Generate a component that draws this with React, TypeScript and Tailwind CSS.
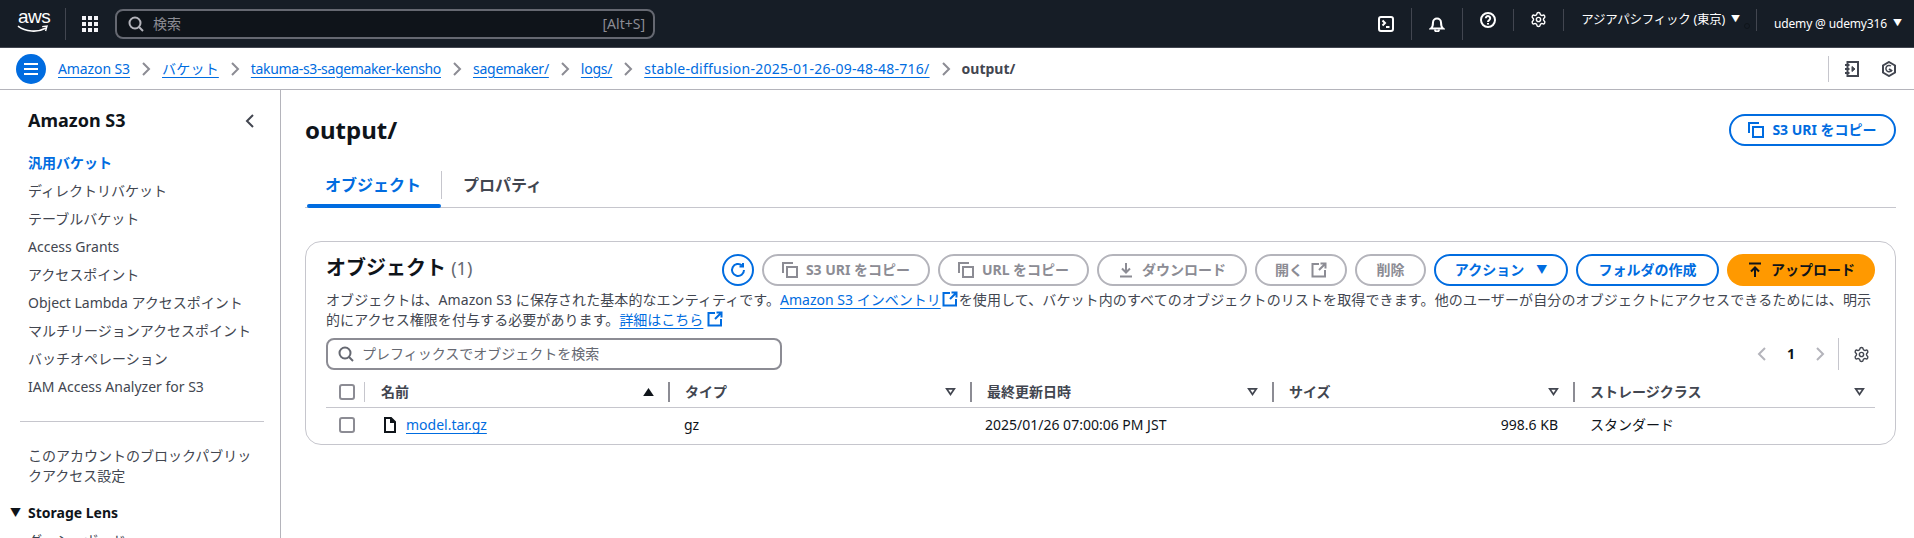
import type { ReactNode } from 'react';
import { Settings } from 'lucide-react';

function Icon({ className = '', children }: { className?: string; children: ReactNode }) {
  return (
    <svg viewBox="0 0 16 16" fill="none" stroke="currentColor" strokeWidth="2" className={`w-4 h-4 shrink-0 ${className}`}>
      {children}
    </svg>
  );
}

const SearchIcon = ({ className = '' }: { className?: string }) => (
  <Icon className={className}>
    <circle cx="7" cy="7" r="5.500" />
    <path d="M11 11 15 15" />
  </Icon>
);
const CopyIcon = () => (
  <Icon>
    <path d="M5 5h10v10H5z" />
    <path d="M11 1H1v10" />
  </Icon>
);
const ExternalIcon = ({ className = '' }: { className?: string }) => (
  <Icon className={className}>
    <path d="M8 2H1.500v12.500H14V8" />
    <path d="M9.500 1.500h5v5M14.500 1.500 8 8" />
  </Icon>
);
const Chevron = () => (
  <Icon className="text-[#8c8c94]">
    <path d="m5 2 6 6-6 6" />
  </Icon>
);

function Crumb({ children, className = 'tracking-[-0.25px]' }: { children: ReactNode; className?: string }) {
  return <a className={`text-[#006ce0] underline underline-offset-[3px] whitespace-nowrap ${className}`}>{children}</a>;
}

function HeaderSep({ short = false }: { short?: boolean }) {
  return <div className={`w-px bg-[#424650] ${short ? 'h-[22px] -mt-[8px]' : 'h-[32px]'}`} />;
}

function ToolButton({ children, disabled = false, width }: { children: ReactNode; disabled?: boolean; width: string }) {
  return (
    <button
      className={`${width} h-8 rounded-full border-2 flex items-center justify-center gap-2 text-sm font-bold whitespace-nowrap ${
        disabled ? 'border-[#b4b4bb] text-[#8c8c94]' : 'border-[#006ce0] text-[#006ce0]'
      }`}
    >
      {children}
    </button>
  );
}

function Checkbox() {
  return <div className="w-4 h-4 rounded-[3px] border-2 border-[#8c8c94] bg-white" />;
}

function SortIcon({ active = false }: { active?: boolean }) {
  return (
    <svg viewBox="0 0 12 9" className="w-[11px] h-[8px] shrink-0">
      {active ? (
        <path d="M6 0l6 9H0z" fill="#0f141a" />
      ) : (
        <path d="M1.800 1h8.400L6 7.200z" fill="none" stroke="#424650" strokeWidth="2" />
      )}
    </svg>
  );
}

function HeadCell({ label, active, sep = true, className = '', iconPad = 'pr-[14px]' }: { label: string; active?: boolean; sep?: boolean; className?: string; iconPad?: string }) {
  return (
    <div className={`flex items-center h-[28px] ${className}`}>
      {sep && <div className="w-0.5 h-[20px] bg-[#8c8c94] mr-[15px]" />}
      <span className="flex-1 font-bold text-sm text-[#424650] whitespace-nowrap">{label}</span>
      <div className={`${iconPad} flex`}>
        <SortIcon active={active} />
      </div>
    </div>
  );
}

const navItems = [
  'ディレクトリバケット',
  'テーブルバケット',
  'Access Grants',
  'アクセスポイント',
  'Object Lambda アクセスポイント',
  'マルチリージョンアクセスポイント',
  'バッチオペレーション',
  'IAM Access Analyzer for S3',
];

export default function App() {
  return (
    <div className='h-[538px] w-[1914px] overflow-hidden bg-white text-sm text-[#0f141a] font-["Noto_Sans","Noto_Sans_CJK_JP",sans-serif]'>
      {/* top bar */}
      <header className="h-[48px] bg-[#161d26] border-b border-[#424650] flex items-center text-white">
        <div className="w-[65px] pl-[17px] flex flex-col items-start leading-none">
          <span className='font-["Liberation_Sans",sans-serif] text-[19px] leading-[14px] tracking-[-0.5px] -mt-[5px] ml-[1px]'>aws</span>
          <svg viewBox="0 0 32 8" className="w-[31px] h-[8px] mt-[1px] text-white">
            <path d="M1 1c8 6 20 7 29 2" fill="none" stroke="currentColor" strokeWidth="1.600" />
            <path d="M26 1.500l5-.5-1.500 5" fill="none" stroke="currentColor" strokeWidth="1.400" />
          </svg>
        </div>
        <div className="w-px h-[32px] bg-[#424650]" />
        <div className="ml-4 grid grid-cols-3 gap-[2px]">
          {Array.from({ length: 9 }).map((_, i) => (
            <div key={i} className="w-[4px] h-[4px] bg-[#f3f3f7]" />
          ))}
        </div>
        <div className="ml-[17px] w-[540px] h-[30px] rounded-lg border-2 border-[#656871] bg-[#0f141a] flex items-center pl-[11px] pr-[8px]">
          <SearchIcon className="text-[#b4b4bb]" />
          <span className="ml-[9px] text-sm text-[#8c8c94]">検索</span>
          <span className="ml-auto text-sm text-[#8c8c94]">[Alt+S]</span>
        </div>
        <div className="ml-auto flex items-center h-full">
          <Icon className="mr-[17px] text-white">
            <rect x="1" y="1" width="14" height="14" rx="2" />
            <path d="m4.500 4.500 2.500 2.500-2.500 2.500M8 11h3.500" />
          </Icon>
          <HeaderSep />
          <Icon className="mx-[17px] text-white">
            <path d="M2 12.500h12c-1.800-1.500-2-3-2-6a4 4 0 0 0-8 0c0 3-.2 4.500-2 6z" />
            <path d="M6 13.500a2 2 0 0 0 4 0" />
          </Icon>
          <HeaderSep />
          <Icon className="mx-[17px] -mt-[8px] text-white">
            <circle cx="8" cy="8" r="7" />
            <path d="M5.800 6.300a2.200 2.200 0 1 1 3.400 1.800c-.8.500-1.200.9-1.200 1.900M8 11v1.500" />
          </Icon>
          <HeaderSep short />
          <Settings size={17} strokeWidth={2} className="mx-[16px] -mt-[8px] text-white" />
          <HeaderSep short />
          <span className="ml-[17px] text-[12.500px] tracking-[-0.25px] whitespace-nowrap -mt-[8px]">アジアパシフィック (東京)</span>
          <span className="ml-[6px] text-[9px] -mt-[8px]">▼</span>
          <div className="w-[6px] h-[6px] ml-[4px] mr-[6px] mt-[4px] rounded-full border border-[#0f141a]" />
          <HeaderSep short />
          <span className="ml-[17px] text-[12px] tracking-[-0.15px] whitespace-nowrap">udemy @ udemy316</span>
          <span className="ml-[6px] mr-[12px] text-[9px]">▼</span>
        </div>
      </header>

      {/* breadcrumb */}
      <div className="h-[42px] border-b border-[#b4b4bb] flex items-center pl-4 text-sm">
        <div className="w-[30px] h-[30px] rounded-full bg-[#006ce0] flex items-center justify-center mr-3">
          <Icon className="text-white">
            <path d="M1 3h14M1 8h14M1 13h14" />
          </Icon>
        </div>
        <Crumb className="tracking-[-0.1px]">Amazon S3</Crumb>
        <div className="mx-2"><Chevron /></div>
        <Crumb className="tracking-[0.2px]">バケット</Crumb>
        <div className="mx-2"><Chevron /></div>
        <Crumb className="tracking-[-0.35px]">takuma-s3-sagemaker-kensho</Crumb>
        <div className="mx-2"><Chevron /></div>
        <Crumb>sagemaker/</Crumb>
        <div className="mx-2"><Chevron /></div>
        <Crumb>logs/</Crumb>
        <div className="mx-2"><Chevron /></div>
        <Crumb className="tracking-[0.25px]">stable-diffusion-2025-01-26-09-48-48-716/</Crumb>
        <div className="mx-2"><Chevron /></div>
        <span className="font-bold text-[#424650]">output/</span>
        <div className="ml-auto flex items-center pr-[17px] text-[#424650]">
          <div className="w-px h-[26px] bg-[#c6c6cd] mr-[15px]" />
          <Icon className="mr-[21px]">
            <path d="M3.500 1H14v14H3.500zM1 4h4.500M1 8h4.500M1 12h4.500" />
            <path d="m8 5.500 3 2.500-3 2.500z" fill="currentColor" strokeWidth="1" />
          </Icon>
          <Icon>
            <path d="m8 1 6 3.500v7L8 15l-6-3.500v-7z" />
            <path d="M11 9a3.200 3.200 0 1 1-1-4" strokeWidth="1.500" />
            <path d="M8 8l3 2" strokeWidth="2" />
          </Icon>
        </div>
      </div>

      <div className="flex h-[448px]">
        {/* side nav */}
        <nav className="w-[281px] shrink-0 border-r border-[#b4b4bb] pl-7 pr-4 pt-[19px] text-[#424650] overflow-hidden">
          <div className="flex items-center justify-between pr-[6px] h-[24px]">
            <span className="text-[18px] font-bold text-[#0f141a]">Amazon S3</span>
            <Icon className="text-[#424650]">
              <path d="M11 2 5 8l6 6" />
            </Icon>
          </div>
          <div className="mt-[16px] flex flex-col">
            <a className="h-[28px] leading-[28px] font-bold text-[#006ce0]">汎用バケット</a>
            {navItems.map((item) => (
              <a key={item} className="h-[28px] leading-[28px] whitespace-nowrap">{item}</a>
            ))}
          </div>
          <div className="h-px bg-[#c6c6cd] -ml-2 mr-0 mt-[20px]" />
          <p className="mt-[24px] leading-[20px] w-[230px]">このアカウントのブロックパブリックアクセス設定</p>
          <div className="relative mt-[17px] font-bold text-[#0f141a] leading-[20px]">
            <span className="absolute -left-[18px] top-0 text-[11px]">▼</span>
            Storage Lens
          </div>
          <p className="mt-[8px]">ダッシュボード</p>
        </nav>

        {/* main */}
        <main className="flex-1 pl-6 pr-[18px]">
          <div className="flex items-start justify-between pt-[24px]">
            <h1 className="text-[24px] font-bold leading-[32px]">output/</h1>
            <ToolButton width="w-[167px]">
              <CopyIcon />
              S3 URI をコピー
            </ToolButton>
          </div>

          <div className="mt-[24px] h-[38px] border-b border-[#c6c6cd] flex items-start text-base font-bold">
            <div className="relative w-[136px] h-[30px] flex items-center justify-center text-[#006ce0]">
              オブジェクト
              <div className="absolute left-[2px] right-0 top-[34px] h-1 rounded-sm bg-[#006ce0]" />
            </div>
            <div className="w-px h-[28px] mt-[1px] bg-[#c6c6cd]" />
            <div className="h-[30px] pl-[21px] flex items-center text-[#424650]">プロパティ</div>
          </div>

          <section className="mt-[33px] h-[204px] rounded-[16px] border border-[#c6c6cd] px-5 pt-[12px]">
            <div className="flex items-center justify-between">
              <h2 className="text-[20px] font-bold leading-[28px] whitespace-nowrap -mt-1">
                オブジェクト <span className="font-normal text-[#656871] text-lg">(1)</span>
              </h2>
              <div className="flex items-center gap-2">
                <div className="w-8 h-8 rounded-full border-2 border-[#006ce0] text-[#006ce0] flex items-center justify-center">
                  <Icon>
                    <path d="M14 8a6 6 0 1 1-2-4.500" />
                    <path d="M13 1v3.500H9.500" />
                  </Icon>
                </div>
                <ToolButton disabled width="w-[168px]">
                  <CopyIcon />
                  S3 URI をコピー
                </ToolButton>
                <ToolButton disabled width="w-[151px]">
                  <CopyIcon />
                  URL をコピー
                </ToolButton>
                <ToolButton disabled width="w-[150px]">
                  <Icon>
                    <path d="M8 1v9M4 6.500 8 10.500l4-4M2 14.500h12" />
                  </Icon>
                  ダウンロード
                </ToolButton>
                <ToolButton disabled width="w-[92px]">
                  開く
                  <ExternalIcon />
                </ToolButton>
                <ToolButton disabled width="w-[71px]">削除</ToolButton>
                <ToolButton width="w-[134px]">
                  アクション
                  <span className="text-[11px] ml-1">▼</span>
                </ToolButton>
                <ToolButton width="w-[143px]">フォルダの作成</ToolButton>
                <button className="w-[148px] h-8 rounded-full bg-[#ff9900] text-[#0f141a] flex items-center justify-center gap-2 text-sm font-bold whitespace-nowrap">
                  <Icon>
                    <path d="M8 15V6M4 9.500 8 5.500l4 4M2 1.500h12" />
                  </Icon>
                  アップロード
                </button>
              </div>
            </div>
            <p className="mt-[4px] leading-[20px] text-[#424650]">
              <span className="tracking-[0.07px]">オブジェクトは、Amazon S3 に保存された基本的なエンティティです。</span>
              <a className="text-[#006ce0] underline underline-offset-[3px]">Amazon S3 インベントリ</a>
              <ExternalIcon className="inline-block text-[#006ce0] align-[-2px] mx-[1px]" />
              <span className="tracking-[0.12px]">を使用して、バケット内のすべてのオブジェクトのリストを取得できます。他のユーザーが自分のオブジェクトにアクセスできるためには、明示</span>
              <br />
              <span className="tracking-[0.07px]">的にアクセス権限を付与する必要があります。</span>
              <a className="text-[#006ce0] underline underline-offset-[3px]">詳細はこちら</a>
              <ExternalIcon className="inline-block text-[#006ce0] align-[-2px] ml-[4px]" />
            </p>

            <div className="mt-[8px] flex items-center">
              <div className="w-[456px] h-8 rounded-lg border-2 border-[#8c8c94] flex items-center pl-[10px] text-[#656871]">
                <SearchIcon className="text-[#656871]" />
                <span className="ml-[8px]">プレフィックスでオブジェクトを検索</span>
              </div>
              <div className="ml-auto flex items-center text-[#424650]">
                <Icon className="text-[#b4b4bb]">
                  <path d="M11 2 5 8l6 6" />
                </Icon>
                <span className="mx-[17px] font-bold text-[#0f141a]">1</span>
                <Icon className="text-[#b4b4bb]">
                  <path d="m5 2 6 6-6 6" />
                </Icon>
                <div className="w-px h-8 bg-[#c6c6cd] ml-[10px] mr-[14px]" />
                <Settings size={17} strokeWidth={2} className="mr-[5px]" />
              </div>
            </div>

            <div className="mt-[8px] grid grid-cols-[40px_302px_302px_302px_301px_302px]">
              <div className="flex items-center h-[28px] pl-[13px] relative">
                <Checkbox />
                <div className="absolute right-[1px] top-[4px] w-px h-[20px] bg-[#c6c6cd]" />
              </div>
              <HeadCell sep={false} label="名前" active className="pl-[15px]" />
              <HeadCell label="タイプ" />
              <HeadCell label="最終更新日時" />
              <HeadCell label="サイズ" />
              <HeadCell label="ストレージクラス" iconPad="pr-[10px]" />
              <div className="col-span-6 h-px bg-[#c6c6cd] mt-[1px]" />
              <div className="flex items-center h-[34px] pl-[13px]">
                <Checkbox />
              </div>
              <div className="flex items-center h-[34px] pl-[16px]">
                <Icon className="text-[#0f141a] mr-[8px]">
                  <path d="M3 1h6l4 4v10H3z" />
                  <path d="M9 1v4h4" fill="currentColor" />
                </Icon>
                <a className="text-[#006ce0] underline underline-offset-[3px]">model.tar.gz</a>
              </div>
              <div className="flex items-center h-[34px] pl-[16px]">gz</div>
              <div className="flex items-center h-[34px] pl-[15px]">2025/01/26 07:00:06 PM JST</div>
              <div className="flex items-center justify-end h-[34px] pr-[15px]">998.6 KB</div>
              <div className="flex items-center h-[34px] pl-[17px]">スタンダード</div>
            </div>
          </section>
        </main>
      </div>
    </div>
  );
}
